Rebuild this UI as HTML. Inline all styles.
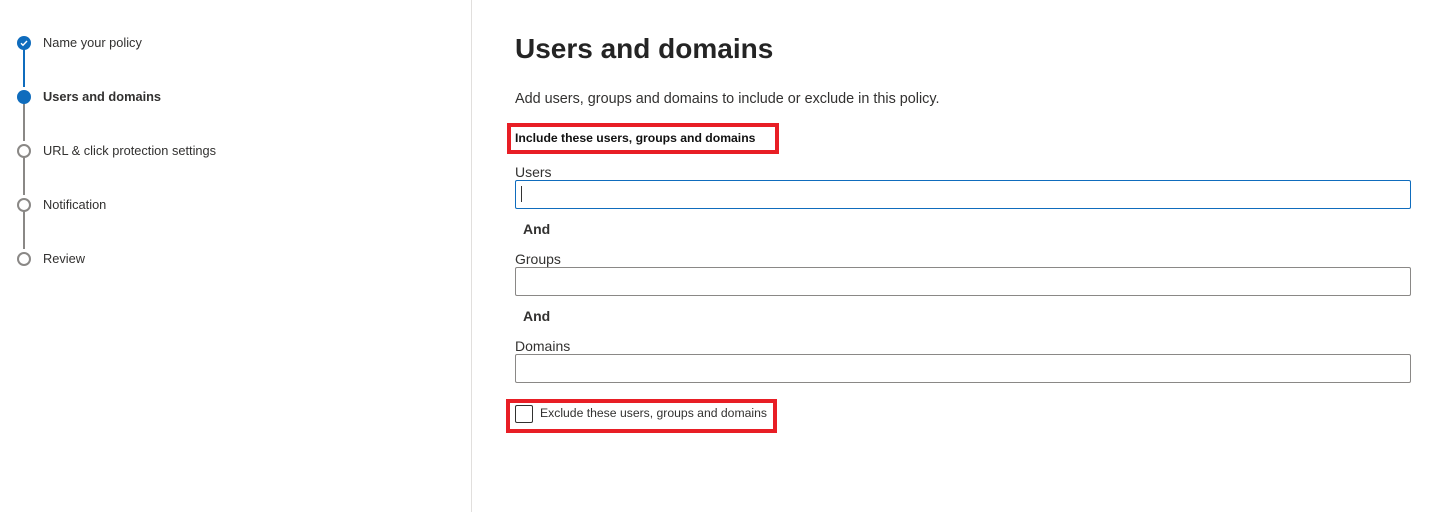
<!DOCTYPE html>
<html><head><style>
body{margin:0;width:1448px;height:512px;background:#fff;font-family:"Liberation Sans",sans-serif;color:#323130;position:relative;overflow:hidden}
.a{position:absolute}
.t{font-size:13px;white-space:nowrap}
.in{position:absolute;left:515px;width:894px;height:27px;border:1px solid #8a8886;border-radius:2px;top:0}
.red{position:absolute;border:4px solid #e81e25;box-sizing:border-box}
</style></head><body>
<div class="a" style="left:471px;top:0;width:1px;height:512px;background:#e1dfdd"></div>
<div class="a" style="left:23px;top:49px;width:2px;height:38px;background:#0f6cbd"></div>
<div class="a" style="left:23px;top:103px;width:2px;height:38px;background:#8a8886"></div>
<div class="a" style="left:23px;top:157px;width:2px;height:38px;background:#8a8886"></div>
<div class="a" style="left:23px;top:211px;width:2px;height:38px;background:#8a8886"></div>
<svg class="a" style="left:17px;top:36px" width="14" height="14"><circle cx="7" cy="7" r="7" fill="#0f6cbd"/><path d="M4 7.2l2 2 4-4.2" stroke="#fff" stroke-width="1.4" fill="none"/></svg>
<div class="a" style="left:17px;top:90px;width:14px;height:14px;border-radius:50%;background:#0f6cbd"></div>
<div class="a" style="left:17px;top:144px;width:10px;height:10px;border-radius:50%;border:2px solid #8a8886"></div>
<div class="a" style="left:17px;top:198px;width:10px;height:10px;border-radius:50%;border:2px solid #8a8886"></div>
<div class="a" style="left:17px;top:252px;width:10px;height:10px;border-radius:50%;border:2px solid #8a8886"></div>
<div class="a t" style="left:43px;top:35px;font-size:12.8px">Name your policy</div>
<div class="a t" style="left:43px;top:89px;font-weight:bold;font-size:12.8px">Users and domains</div>
<div class="a t" style="left:43px;top:143px;font-size:12.8px">URL &amp; click protection settings</div>
<div class="a t" style="left:43px;top:197px;font-size:12.8px">Notification</div>
<div class="a t" style="left:43px;top:251px;font-size:12.8px">Review</div>
<div class="a" style="left:515px;top:33px;font-size:28px;font-weight:bold;color:#242424">Users and domains</div>
<div class="a t" style="left:515px;top:91px;font-size:14.4px">Add users, groups and domains to include or exclude in this policy.</div>
<div class="red" style="left:507px;top:123px;width:272px;height:31px"></div>
<div class="a t" style="left:515px;top:131px;font-weight:bold;font-size:12.2px;color:#111">Include these users, groups and domains</div>
<div class="a t" style="left:515px;top:164px;font-size:14px">Users</div>
<div class="in" style="top:180px;border-color:#0f6cbd"></div>
<div class="a" style="left:521px;top:186px;width:1px;height:16px;background:#333"></div>
<div class="a t" style="left:523px;top:221px;font-weight:bold;font-size:14px">And</div>
<div class="a t" style="left:515px;top:251px;font-size:14px">Groups</div>
<div class="in" style="top:267px"></div>
<div class="a t" style="left:523px;top:308px;font-weight:bold;font-size:14px">And</div>
<div class="a t" style="left:515px;top:338px;font-size:14px">Domains</div>
<div class="in" style="top:354px"></div>
<div class="red" style="left:506px;top:399px;width:271px;height:34px"></div>
<div class="a" style="left:515px;top:405px;width:16px;height:16px;border:1px solid #323130;border-radius:2px"></div>
<div class="a t" style="left:540px;top:406px;font-size:12.2px">Exclude these users, groups and domains</div>
</body></html>
